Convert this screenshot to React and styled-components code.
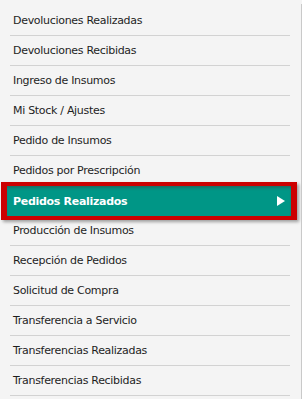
import React from 'react';
import styled, { createGlobalStyle } from 'styled-components';

const items = [
    'Devoluciones Realizadas',
    'Devoluciones Recibidas',
    'Ingreso de Insumos',
    'Mi Stock / Ajustes',
    'Pedido de Insumos',
    'Pedidos por Prescripción',
    'Pedidos Realizados',
    'Producción de Insumos',
    'Recepción de Pedidos',
    'Solicitud de Compra',
    'Transferencia a Servicio',
    'Transferencias Realizadas',
    'Transferencias Recibidas',
];

const ACTIVE = 'Pedidos Realizados';

const GlobalStyle = createGlobalStyle`
    html, body {
        margin: 0;
        padding: 0;
        background: #f4f4f4;
        overflow: hidden;
    }
`;

const App = () => {
    return (
        <>
            <GlobalStyle />
            <Panel>
                <Menu>
                    {items.map((label) =>
                        label === ACTIVE ? (
                            <ActiveItem key={label}>
                                <span>{label}</span>
                                <Arrow viewBox="0 0 8 10">
                                    <path d="M0 0 L8 5 L0 10 Z" fill="#ffffff" />
                                </Arrow>
                            </ActiveItem>
                        ) : (
                            <Item key={label}>{label}</Item>
                        )
                    )}
                </Menu>
            </Panel>
        </>
    );
};

const Panel = styled.div`
    box-sizing: border-box;
    width: 302px;
    height: 395px;
    margin-top: 4px;
    padding-top: 2px;
    border-right: 1px solid #c9c9c9;
    overflow: hidden;
    background: #f4f4f4;
`;

const Menu = styled.ul`
    list-style: none;
    margin: 0 0 0 10px;
    padding: 0;
    width: 280px;
    font-family: "DejaVu Sans", Verdana, sans-serif;
    font-size: 11px;
    letter-spacing: -0.3px;
`;

const Item = styled.li`
    display: flex;
    align-items: center;
    height: 29px;
    padding-left: 3px;
    border-bottom: 1px solid #d2d2d2;
    color: #1e1e1e;
    cursor: pointer;
`;

const ActiveItem = styled.li`
    position: relative;
    display: flex;
    align-items: center;
    justify-content: space-between;
    height: 30px;
    margin: -4px -7px -4px -9px;
    padding: 0 6px;
    background: #009686;
    border: solid #cc0000;
    border-width: 4px 6px;
    box-shadow: 2px 2px 3px rgba(0, 0, 0, 0.35), inset 0 3px 3px -1px rgba(60, 60, 60, 0.45);
    color: #ffffff;
    font-weight: bold;
    z-index: 1;
`;

const Arrow = styled.svg`
    width: 8px;
    height: 10px;
`;

export default App;
